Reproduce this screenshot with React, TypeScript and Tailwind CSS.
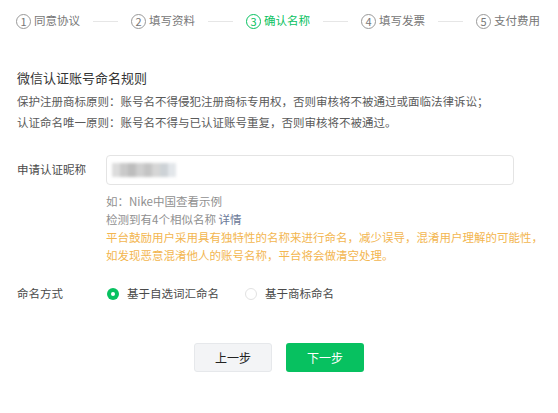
const font = { fontFamily: '"Noto Sans CJK SC", "Liberation Sans", sans-serif' };

const steps = [
  { n: 1, label: '同意协议' },
  { n: 2, label: '填写资料' },
  { n: 3, label: '确认名称', active: true },
  { n: 4, label: '填写发票' },
  { n: 5, label: '支付费用' },
];

function StepBar() {
  return (
    <div className="flex h-[42px] items-center pl-[16px]">
      {steps.map((s, i) => (
        <div key={s.n} className="flex items-center">
          {i > 0 && <div className="mx-[13px] h-px w-[25px] bg-[#e6e6e6]" />}
          <div
            className={`flex w-[64px] items-center gap-[3px] whitespace-nowrap ${
              s.active ? 'text-[#07c160]' : 'text-[#777]'
            }`}
          >
            <span
              className={`flex h-[15px] w-[15px] shrink-0 items-center justify-center rounded-full border text-[11px] leading-none ${
                s.active ? 'border-[#07c160]' : 'border-[#999]'
              }`}
            >
              {s.n}
            </span>
            <span className="text-[11.5px] leading-none">{s.label}</span>
          </div>
        </div>
      ))}
    </div>
  );
}

function BlurredName() {
  const shades = ['#dcdcdc', '#c9c9c9', '#bdbdbd', '#cfcfcf', '#c4c4c4', '#d6d6d6', '#cdd2d6', '#e2e6ea'];
  return (
    <div className="flex h-[14px] blur-[1.5px]">
      {shades.map((c, i) => (
        <div key={i} className="h-full w-[8px]" style={{ backgroundColor: c }} />
      ))}
    </div>
  );
}

function Radio({ checked, label }: { checked?: boolean; label: string }) {
  return (
    <label className="flex items-center gap-[8px]">
      {checked ? (
        <span className="flex h-[12px] w-[12px] items-center justify-center rounded-full bg-[#07c160]">
          <span className="h-[4px] w-[4px] rounded-full bg-white" />
        </span>
      ) : (
        <span className="h-[12px] w-[12px] rounded-full border border-[#e2e2e2] bg-white" />
      )}
      <span className="text-[11.5px] text-[#4a4a4a]">{label}</span>
    </label>
  );
}

export default function App() {
  return (
    <div className="h-[413px] w-[558px] overflow-hidden bg-white whitespace-nowrap" style={font}>
      <StepBar />

      <div className="pl-[17px]">
        <h2 className="mt-[27px] text-[13px] leading-[18px] text-[#353535]">微信认证账号命名规则</h2>
        <div className="mt-[4px] text-[11.5px] leading-[21px] text-[#5a5a5a]">
          <p>保护注册商标原则：账号名不得侵犯注册商标专用权，否则审核将不被通过或面临法律诉讼；</p>
          <p>认证命名唯一原则：账号名不得与已认证账号重复，否则审核将不被通过。</p>
        </div>

        <div className="mt-[22px] flex items-center">
          <span className="w-[89px] text-[11.5px] text-[#4a4a4a]">申请认证昵称</span>
          <div className="flex h-[30px] w-[408px] items-center rounded-[4px] border border-[#e4e4e4] px-[5px]">
            <BlurredName />
          </div>
        </div>

        <div className="ml-[89px] mt-[7px] text-[11.5px] leading-[18px]">
          <p className="text-[#909090]">如：Nike中国查看示例</p>
          <p className="text-[#909090]">
            检测到有4个相似名称 <span className="text-[#6b7a99]">详情</span>
          </p>
          <p className="text-[#f3b650]">平台鼓励用户采用具有独特性的名称来进行命名，减少误导，混淆用户理解的可能性，</p>
          <p className="text-[#f3b650]">如发现恶意混淆他人的账号名称，平台将会做清空处理。</p>
        </div>

        <div className="mt-[20px] flex h-[20px] items-center">
          <span className="w-[90px] text-[11.5px] text-[#4a4a4a]">命名方式</span>
          <div className="flex items-center gap-[26px]">
            <Radio checked label="基于自选词汇命名" />
            <Radio label="基于商标命名" />
          </div>
        </div>
      </div>

      <div className="mt-[39px] flex justify-center gap-[14px]">
        <button className="h-[29px] w-[78px] rounded-[3px] border border-[#e6e8eb] bg-[#f3f4f6] text-[12px] text-[#222]">
          上一步
        </button>
        <button className="h-[29px] w-[78px] rounded-[3px] bg-[#07c160] text-[12px] text-white">下一步</button>
      </div>
    </div>
  );
}
